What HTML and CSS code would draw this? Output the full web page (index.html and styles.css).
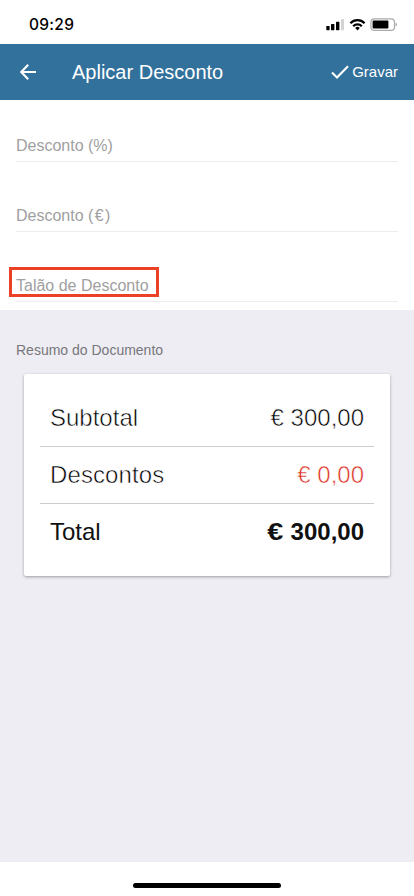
FILE: index.html
```html
<!DOCTYPE html>
<html lang="pt">
<head>
<meta charset="utf-8">
<meta name="viewport" content="width=device-width, initial-scale=1">
<title>Aplicar Desconto</title>
<link rel="stylesheet" href="styles.css">
</head>
<body>
<div class="status">
  <span class="time">09:29</span>
  <svg class="indicators" width="84" height="16" viewBox="0 0 84 16">
    <rect x="0.3" y="10" width="3.3" height="4.2" rx=".6"/>
    <rect x="5" y="8" width="3.4" height="6.2" rx=".6"/>
    <rect x="10" y="5.8" width="3.4" height="8.4" rx=".6"/>
    <rect x="15" y="3" width="3" height="11.2" rx=".6" fill="#d4d4d4"/>
    <g fill="none" stroke="#000" stroke-width="2.3">
      <path d="M24.4 7.2A9.8 9.8 0 0 1 38.6 7.2"/>
      <path d="M27.2 10.2A6 6 0 0 1 35.8 10.2"/>
    </g>
    <path d="M29.2 12A3.2 3.2 0 0 1 33.8 12L31.5 14.4z"/>
    <rect x="44.9" y="2.9" width="23.6" height="11.4" rx="3.4" fill="#fff" stroke="#aaa" stroke-width="1.2"/>
    <rect x="46.6" y="4.6" width="15.8" height="8" rx="1"/>
    <path d="M69.7 6.8Q71 7.4 71 8.6T69.7 10.4z" fill="#999"/>
  </svg>
</div>
<header class="bar">
  <svg class="back" width="16" height="16" viewBox="0 0 16 16"><path d="M8.2 .8L1.2 8L8.2 15.2M1.2 8H16"/></svg>
  <h1>Aplicar Desconto</h1>
  <div class="save">
    <svg width="18" height="14" viewBox="0 0 18 14"><path d="M1 7.4L6 12.4L17 1.2"/></svg>
    <span>Gravar</span>
  </div>
</header>
<section class="form">
  <div class="field"><span>Desconto (%)</span></div>
  <div class="field"><span>Desconto <i class="euro">(€</i>)</span></div>
  <div class="field"><span class="marked">Talão de Desconto</span></div>
</section>
<main class="summary">
  <h2>Resumo do Documento</h2>
  <div class="card">
    <div class="row"><span class="light">Subtotal</span><span class="light">€ 300,00</span></div>
    <div class="row"><span class="light descontos">Descontos</span><span class="light red">€ 0,00</span></div>
    <div class="row"><span class="total">Total</span><b><i class="wide">€</i> 300,00</b></div>
  </div>
</main>
<footer class="home"><div class="handle"></div></footer>
</body>
</html>
```
FILE: styles.css
```css
*, ::before, ::after { box-sizing: border-box; }
body {
  margin: 0;
  height: 896px;
  display: flex;
  flex-direction: column;
  background: #fff;
  font-family: "Liberation Sans", Arial, sans-serif;
  overflow: hidden;
}
h1, h2 { margin: 0; font-weight: 400; }
i { font-style: normal; }
.status {
  height: 44px;
  flex: none;
  display: flex;
  justify-content: space-between;
  align-items: flex-start;
  padding: 15px 4px 0 29px;
}
.time {
  font: 500 15.5px/20px Inter, sans-serif;
  letter-spacing: .3px;
  color: #000;
}
.indicators { margin-top: 1px; }
.bar {
  height: 56px;
  flex: none;
  display: flex;
  align-items: center;
  padding: 0 16px 0 20px;
  background: #32719b;
  color: #fff;
}
.bar svg { fill: none; stroke: #fff; stroke-width: 2.1; }
.bar h1 { margin-left: 36px; font-size: 20px; line-height: 24px; }
.save {
  margin-left: auto;
  display: flex;
  align-items: center;
  gap: 3px;
  font-size: 15px;
}
.save span { margin-top: -1px; }
.form { height: 210px; flex: none; padding: 0 16px; }
.field {
  height: 70px;
  padding-top: 37px;
  font-size: 16px;
  line-height: 18px;
  color: #a0a0a0;
}
.field::after {
  content: "";
  display: block;
  height: 1px;
  margin-top: 6px;
  background: #ededed;
}
.field span { display: block; width: max-content; }
.euro { letter-spacing: 1.4px; }
.marked { position: relative; }
.marked::after {
  content: "";
  position: absolute;
  left: -7px;
  top: -10px;
  width: 150px;
  height: 30px;
  border: 3px solid #eb4127;
}
.summary {
  height: 552px;
  flex: none;
  padding: 32px 24px 0;
  background: #eeedf3;
}
.summary h2 {
  margin-left: -8px;
  font-size: 14px;
  line-height: 16px;
  color: #77777b;
}
.card {
  height: 202px;
  margin-top: 16px;
  padding: 15px 16px 16px;
  background: #fff;
  border-radius: 2px;
  box-shadow: 0 1px 3px rgba(0, 0, 0, .35);
}
.row {
  height: 57px;
  padding: 0 10px;
  display: flex;
  align-items: center;
  justify-content: space-between;
  font-size: 24px;
  line-height: 28px;
  color: #111;
}
.row + .row { border-top: 1px solid #ccc; }
.light { -webkit-text-stroke: .55px #fff; color: #000; }
.descontos { letter-spacing: .1px; }
.wide { display: inline-block; transform: scaleX(1.2); transform-origin: right; margin-right: .5px; }
.red { color: #dc301f; }
.home {
  height: 34px;
  flex: none;
  display: flex;
  justify-content: center;
  padding-top: 21px;
}
.handle { width: 148px; height: 5px; border-radius: 3px; background: #000; }
```
